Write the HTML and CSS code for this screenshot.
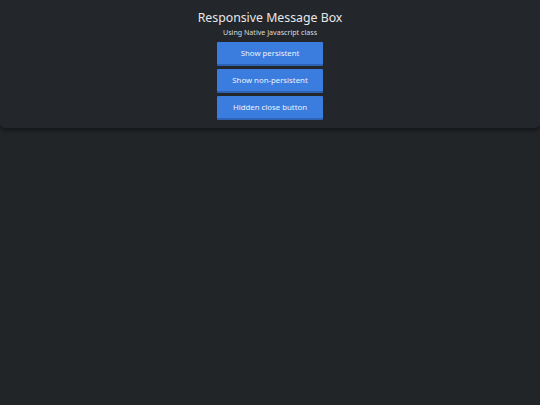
FILE: index.html
```html
<!DOCTYPE html>
<html>
<head>
<meta charset="utf-8">
<link rel="stylesheet" href="styles.css">
</head>
<body>
<div class="panel">
  <h1 class="title">Responsive Message Box</h1>
  <p class="subtitle">Using Native Javascript class</p>
  <div class="buttons">
    <button class="btn">Show persistent</button>
    <button class="btn">Show non-persistent</button>
    <button class="btn">Hidden close button</button>
  </div>
</div>
</body>
</html>
```
FILE: styles.css
```css
html, body {
  margin: 0;
  padding: 0;
  background: #222528;
  height: 100%;
}
body {
  font-family: "Noto Sans", "Open Sans", sans-serif;
  color: #e6e6e6;
}
.panel {
  background: #23262a;
  border-radius: 0 0 5px 5px;
  box-shadow: 0 2px 4px rgba(0,0,0,0.5);
  padding: 9px 0 8px;
  display: flex;
  flex-direction: column;
  align-items: center;
}
.title {
  margin: 0;
  font-size: 12.3px;
  font-weight: 400;
  line-height: 17px;
  color: #e8e8e8;
}
.subtitle {
  margin: 1px 0 5px;
  font-size: 7.1px;
  line-height: 10px;
  color: #dcdcdc;
}
.buttons {
  display: flex;
  flex-direction: column;
  gap: 3px;
}
.btn {
  width: 106px;
  height: 24px;
  background: #3a7ddf;
  border: none;
  border-bottom: 2px solid #2e62b5;
  border-radius: 1px;
  color: #eef3fb;
  font-family: "Noto Sans", "Open Sans", sans-serif;
  font-size: 7.8px;
  padding: 0;
}
```
